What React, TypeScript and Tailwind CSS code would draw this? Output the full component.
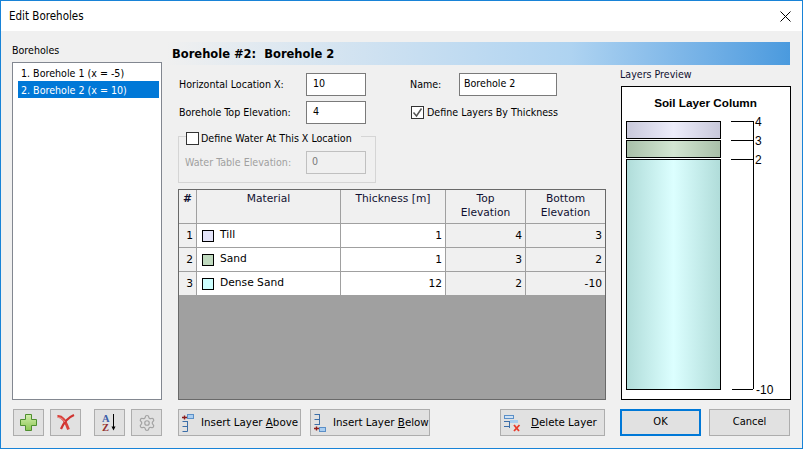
import { ReactNode } from 'react'
import { Settings } from 'lucide-react'

const ui = "font-['DejaVu_Sans',sans-serif] font-stretch-condensed"
const grid = "font-['DejaVu_Sans',sans-serif] font-stretch-normal"

function ToolButton({ children, className = '' }: { children: ReactNode; className?: string }) {
  return (
    <button className={`h-[27px] border border-[#adadad] bg-[#e1e1e1] flex items-center whitespace-nowrap text-[10.3px] text-black ${grid} ${className}`}>
      {children}
    </button>
  )
}

function PlusIcon() {
  return (
    <svg width="17" height="17" viewBox="0 0 17 17">
      <defs>
        <linearGradient id="plus" x1="0" x2="0" y1="0" y2="1">
          <stop offset="0" stopColor="#d3eeae" />
          <stop offset="1" stopColor="#8cc652" />
        </linearGradient>
      </defs>
      <path d="M5.500 0.500h6v5h5v6h-5v5h-6v-5h-5v-6h5z" fill="url(#plus)" stroke="#4f8f2f" />
    </svg>
  )
}

function CrossIcon() {
  return (
    <svg width="18" height="17" viewBox="0 0 18 17" fill="none">
      <path d="M0.500 2.500C5 2 8 6 11.500 15.500" stroke="#d9413b" strokeWidth="2.800" />
      <path d="M17 1C11 3.500 7 8 4 15" stroke="#cf3330" strokeWidth="2.200" />
      <path d="M1 3.500C4 3.500 6 5 8 8" stroke="#f0a09a" strokeWidth="0.800" />
    </svg>
  )
}

function SortIcon() {
  return (
    <svg width="21" height="19" viewBox="0 0 21 19">
      <text x="3" y="9" fontSize="10.500" fontWeight="700" fontFamily="Liberation Serif" fill="#3c5da8">A</text>
      <text x="3" y="18" fontSize="10.500" fontWeight="700" fontFamily="Liberation Serif" fill="#94302f">Z</text>
      <path d="M14.500 1v13" stroke="#000" />
      <path d="M12.500 13.500h4l-2 4z" fill="#000" />
    </svg>
  )
}

function LayerIcon({ kind }: { kind: 'above' | 'below' | 'delete' }) {
  return (
    <svg width="17" height="18" viewBox="0 0 17 18" fill="none" className="shrink-0">
      {kind === 'above' && (
        <>
          <path d="M0 3.500h5M2.500 1.500v4" stroke="#8c1c1c" strokeWidth="1.400" />
          <rect x="5.500" y="0.500" width="6" height="4" fill="#a9cdf0" stroke="#5b8fc7" />
          <path d="M5.500 7v10.500M0.500 7.500h5M0.500 12.500h5M0.500 17.500h5" stroke="#3c6ea8" />
        </>
      )}
      {kind === 'below' && (
        <>
          <path d="M5.500 0v11M0.500 0.500h5M0.500 5.500h5M0.500 10.500h5" stroke="#3c6ea8" />
          <path d="M0 14.500h5M2.500 12.500v4" stroke="#8c1c1c" strokeWidth="1.400" />
          <rect x="5.500" y="13.500" width="6" height="4" fill="#a9cdf0" stroke="#5b8fc7" />
        </>
      )}
      {kind === 'delete' && (
        <>
          <rect x="0.500" y="1.500" width="9" height="3" fill="#cfe2f5" stroke="#5b8fc7" />
          <path d="M0 7.500h13M5.500 7.500V14M0 12.500h5.500" stroke="#3c6ea8" />
          <rect x="6" y="6" width="8" height="3" fill="#a9cdf0" />
          <path d="M10 11l5 6M15.500 11l-5.500 6" stroke="#e8392a" strokeWidth="1.800" />
        </>
      )}
    </svg>
  )
}

const rows = [
  { n: 1, name: 'Till', color: 'bg-[#e4e4f8]', thick: '1', top: '4', bottom: '3' },
  { n: 2, name: 'Sand', color: 'bg-[#c0dabf]', thick: '1', top: '3', bottom: '2' },
  { n: 3, name: 'Dense Sand', color: 'bg-[#ccffff]', thick: '12', top: '2', bottom: '-10' },
]

const cols = 'grid grid-cols-[18px_144px_105px_80px_79px]'
const headCell = 'bg-[#f0f0f0] border-r border-[#a0a0a0] text-center text-[#101030] pt-[2px]'
const numCell = 'text-right pr-[3px] leading-[23px]'

function LayersTable() {
  return (
    <div className={`h-[211px] w-[428px] border border-[#696969] bg-[#a0a0a0] text-[10.7px] ${grid}`}>
      <div className={`${cols} h-[34px] border-b border-[#a0a0a0] leading-[14px]`}>
        <div className={`${headCell} font-bold`}>#</div>
        <div className={headCell}>Material</div>
        <div className={headCell}>Thickness [m]</div>
        <div className={headCell}>Top<br />Elevation</div>
        <div className={`${headCell} border-r-0`}>Bottom<br />Elevation</div>
      </div>
      {rows.map((r) => (
        <div key={r.n} className={`${cols} h-[24px] border-b border-[#a0a0a0] items-stretch`}>
          <div className={`bg-[#f0f0f0] border-r border-[#a0a0a0] ${numCell}`}>{r.n}</div>
          <div className="bg-white border-r border-[#a0a0a0] flex items-center pl-[5px] gap-[6px]">
            <span className={`w-[12px] h-[12px] border border-black ${r.color}`} />
            <span>{r.name}</span>
          </div>
          <div className={`bg-white border-r border-[#a0a0a0] ${numCell}`}>{r.thick}</div>
          <div className={`bg-[#f0f0f0] border-r border-[#a0a0a0] ${numCell}`}>{r.top}</div>
          <div className={`bg-[#f0f0f0] ${numCell}`}>{r.bottom}</div>
        </div>
      ))}
    </div>
  )
}

function SoilColumn() {
  const ticks = [
    { y: 121, label: '4' },
    { y: 140, label: '3' },
    { y: 159, label: '2' },
  ]
  return (
    <svg width="170" height="314" viewBox="621 86 170 314" className="block">
      <defs>
        <linearGradient id="till" x1="0" x2="1" y1="0" y2="0">
          <stop offset="0" stopColor="#c8c8da" />
          <stop offset="0.5" stopColor="#ededfb" />
          <stop offset="1" stopColor="#c8c8da" />
        </linearGradient>
        <linearGradient id="sand" x1="0" x2="1" y1="0" y2="0">
          <stop offset="0" stopColor="#a8bfa8" />
          <stop offset="0.5" stopColor="#d3e6d2" />
          <stop offset="1" stopColor="#a8bfa8" />
        </linearGradient>
        <linearGradient id="dense" x1="0" x2="1" y1="0" y2="0">
          <stop offset="0" stopColor="#b0dcd9" />
          <stop offset="0.5" stopColor="#dcffff" />
          <stop offset="1" stopColor="#b0dcd9" />
        </linearGradient>
      </defs>
      <rect x="621.500" y="86.500" width="169" height="313" fill="#fff" stroke="#000" />
      <text x="705.500" y="107" textAnchor="middle" fontSize="11.700" fontWeight="700" fontFamily="Liberation Sans">Soil Layer Column</text>
      <rect x="626.500" y="121.500" width="94" height="17" fill="url(#till)" stroke="#000" />
      <rect x="626.500" y="140.500" width="94" height="17" fill="url(#sand)" stroke="#000" />
      <rect x="626.500" y="159.500" width="94" height="230" fill="url(#dense)" stroke="#000" />
      <path d="M753.500 121v268" stroke="#000" fill="none" />
      {ticks.map((t) => (
        <g key={t.label}>
          <path d={`M731 ${t.y + 0.5}h22`} stroke="#000" />
          <text x="755" y={t.y + 4.5} fontSize="12" fontFamily="Liberation Sans">{t.label}</text>
        </g>
      ))}
      <path d="M732 389.500h21" stroke="#000" />
      <text x="756" y="394" fontSize="12" fontFamily="Liberation Sans">-10</text>
    </svg>
  )
}

export default function App() {
  return (
    <div className={`w-[803px] h-[449px] overflow-hidden border border-[#1883d7] flex flex-col text-[10.6px] text-black bg-[#f0f0f0] whitespace-nowrap ${ui}`}>
      {/* Title bar */}
      <div className="h-[30px] bg-white flex items-center justify-between pl-[8px] pr-[11px] shrink-0">
        <span className="text-[11.5px] pt-[1px]">Edit Boreholes</span>
        <svg width="11" height="11" viewBox="0 0 11 11" stroke="#000" fill="none">
          <path d="M0.500 0.500l10 10M10.500 0.500l-10 10" />
        </svg>
      </div>

      <div className="flex-1 flex pt-[11px]">
        {/* Borehole list */}
        <div className="w-[150px] ml-[11px] shrink-0 flex flex-col">
          <div className="h-[20px] leading-[16px]">Boreholes</div>
          <div className="h-[338px] border border-[#828790] bg-white pt-[1px] pl-[5px] pr-[2px]">
            <div className="h-[17px] leading-[18px] pl-[3px]">1. Borehole 1 (x = -5)</div>
            <div className="h-[17px] leading-[18px] pl-[3px] bg-[#0078d7] text-white">2. Borehole 2 (x = 10)</div>
          </div>
          <div className="flex mt-[9px] pl-[1px]">
            <ToolButton className="w-[31px] justify-center"><PlusIcon /></ToolButton>
            <ToolButton className="w-[31px] ml-[6px] justify-center"><CrossIcon /></ToolButton>
            <ToolButton className="w-[31px] ml-[13px] justify-center"><SortIcon /></ToolButton>
            <ToolButton className="w-[31px] ml-[6px] justify-center"><Settings size={18} color="#a3a3a3" strokeWidth={1.6} /></ToolButton>
          </div>
        </div>

        <div className="w-[624px] ml-[4px] flex flex-col">
          {/* Header band */}
          <div className={`h-[23px] leading-[24px] pl-[6px] font-bold text-[11.5px] bg-gradient-to-r from-[#f0f0f0] via-[#aed3f1] via-65% to-[#4a9ade] ${grid}`}>
            Borehole #2:&nbsp; Borehole 2
          </div>

          <div className="flex flex-1">
            <div className="w-[428px] ml-[12px] shrink-0 flex flex-col">
              <div className="h-[124px] pt-[8px]">
                <div className="flex items-center h-[23px]">
                  <span className="w-[128px] pl-[1px]">Horizontal Location X:</span>
                  <span className="w-[60px] h-[23px] border border-[#7a7a7a] bg-white pl-[6px] leading-[19px]">10</span>
                  <span className="w-[49px] ml-[44px]">Name:</span>
                  <span className="w-[98px] h-[23px] border border-[#7a7a7a] bg-white pl-[4px] leading-[19px]">Borehole 2</span>
                </div>
                <div className="flex items-center h-[23px] mt-[5px]">
                  <span className="w-[128px] pl-[1px]">Borehole Top Elevation:</span>
                  <span className="w-[60px] h-[23px] border border-[#7a7a7a] bg-white pl-[6px] leading-[19px]">4</span>
                  <span className="ml-[45px] flex items-center gap-[3px]">
                    <span className="w-[13px] h-[13px] border border-[#333] bg-white flex items-center justify-center">
                      <svg width="11" height="11" viewBox="0 0 11 11" fill="none" stroke="#555" strokeWidth="1.500">
                        <path d="M1.500 5.500l3 3.500 5-7.500" />
                      </svg>
                    </span>
                    Define Layers By Thickness
                  </span>
                </div>
                {/* Water group */}
                <div className="relative w-[198px] h-[47px] mt-[12px] border border-[#d5d5d5] pt-[14px] pl-[6px]">
                  <span className="absolute -top-[6px] left-[7px] bg-[#f0f0f0] pr-[9px] flex items-center gap-[2px] leading-[14px]">
                    <span className="w-[13px] h-[13px] border border-[#333] bg-white" />
                    Define Water At This X Location
                  </span>
                  <div className="flex items-center h-[23px]">
                    <span className="w-[121px] text-[#a0a0a0]">Water Table Elevation:</span>
                    <span className="w-[60px] h-[23px] border border-[#c0c0c0] pl-[5px] leading-[19px] text-[#7a7a7a]">0</span>
                  </div>
                </div>
              </div>

              <LayersTable />

              <div className="flex mt-[9px]">
                <ToolButton className="w-[123px] pl-[3px] gap-[2px]"><LayerIcon kind="above" /><span>Insert Layer <u>A</u>bove</span></ToolButton>
                <ToolButton className="w-[120px] ml-[9px] pl-[3px] gap-[2px]"><LayerIcon kind="below" /><span>Insert Layer <u>B</u>elow</span></ToolButton>
                <ToolButton className="w-[105px] ml-[70px] pl-[3px] gap-[10px]"><LayerIcon kind="delete" /><span><u>D</u>elete Layer</span></ToolButton>
              </div>
            </div>

            <div className="w-[170px] ml-[15px] shrink-0 flex flex-col">
              <div className="h-[21px] leading-[14px] pt-[2px] -ml-[1px] text-[#101030]">Layers Preview</div>
              <SoilColumn />
              <div className="flex mt-[9px] justify-between">
                <button className="w-[81px] h-[27px] -ml-[1px] border-2 border-[#0078d7] bg-[#e1e1e1] text-[11px]">OK</button>
                <button className="w-[81px] h-[27px] mr-[1px] border border-[#adadad] bg-[#e1e1e1] text-[11px]">Cancel</button>
              </div>
            </div>
          </div>
        </div>
      </div>
    </div>
  )
}
